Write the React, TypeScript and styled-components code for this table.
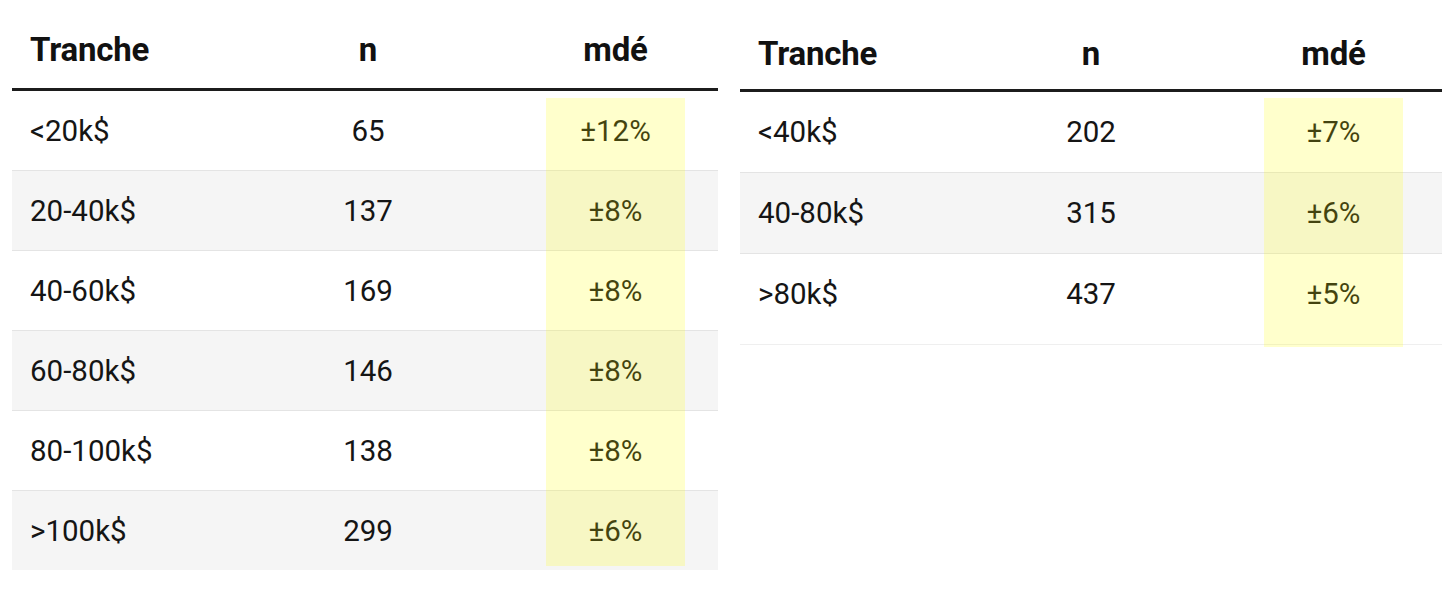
import React from "react";
import styled, { createGlobalStyle } from "styled-components";

const Global = createGlobalStyle`
  html, body { margin: 0; padding: 0; background: #ffffff; }
  body { font-family: Roboto, "Liberation Sans", Arial, sans-serif; color: #151515; }
`;

const Page = styled.div`
  display: flex;
  align-items: flex-start;
  gap: 22px;
  padding-left: 12px;
  width: 1456px;
  height: 591px;
  box-sizing: border-box;
`;

const Table = styled.div<{ $width: number }>`
  position: relative;
  width: ${(p) => p.$width}px;
  display: flex;
  flex-direction: column;
`;

const HeaderRow = styled.div<{ $cols: string; $padTop: number; $height: number }>`
  display: grid;
  grid-template-columns: ${(p) => p.$cols};
  align-items: center;
  box-sizing: border-box;
  height: ${(p) => p.$height}px;
  padding-top: ${(p) => p.$padTop}px;
  border-bottom: 3px solid #1c1c1c;
`;

const HeadCell = styled.div<{ $align: "left" | "center" }>`
  font-size: 33px;
  font-weight: 700;
  letter-spacing: -0.2px;
  color: #111;
  text-align: ${(p) => p.$align};
  padding-left: ${(p) => (p.$align === "left" ? "18px" : "0")};
`;

const Body = styled.div<{ $padBottom: number }>`
  display: flex;
  flex-direction: column;
  padding-bottom: ${(p) => p.$padBottom}px;
  border-bottom: ${(p) => (p.$padBottom > 0 ? "1px solid #efefef" : "none")};
`;

const Row = styled.div<{ $cols: string; $shaded: boolean; $last: boolean; $h: number }>`
  display: grid;
  grid-template-columns: ${(p) => p.$cols};
  align-items: center;
  height: ${(p) => p.$h}px;
  background: ${(p) => (p.$shaded ? "#f5f5f5" : "#ffffff")};
  border-bottom: ${(p) => (p.$last ? "none" : "1px solid #e4e4e4")};
`;

const Cell = styled.div<{ $align: "left" | "center" }>`
  font-size: 29.5px;
  font-weight: 400;
  color: #151515;
  text-align: ${(p) => p.$align};
  padding-left: ${(p) => (p.$align === "left" ? "18px" : "0")};
`;

const Highlight = styled.div<{ $left: number; $top: number; $height: number }>`
  position: absolute;
  left: ${(p) => p.$left}px;
  top: ${(p) => p.$top}px;
  width: 139px;
  height: ${(p) => p.$height}px;
  background: rgba(255, 255, 0, 0.2);
  pointer-events: none;
`;

type RowData = [string, string, string];

const leftRows: RowData[] = [
  ["<20k$", "65", "±12%"],
  ["20-40k$", "137", "±8%"],
  ["40-60k$", "169", "±8%"],
  ["60-80k$", "146", "±8%"],
  ["80-100k$", "138", "±8%"],
  [">100k$", "299", "±6%"],
];

const rightRows: RowData[] = [
  ["<40k$", "202", "±7%"],
  ["40-80k$", "315", "±6%"],
  [">80k$", "437", "±5%"],
];

interface DataTableProps {
  width: number;
  cols: string;
  rows: RowData[];
  headPad: number;
  headHeight: number;
  rowHeight: number;
  bodyPad: number;
  hlLeft: number;
  hlTop: number;
  hlHeight: number;
}

function DataTable(p: DataTableProps) {
  return (
    <Table $width={p.width}>
      <HeaderRow $cols={p.cols} $padTop={p.headPad} $height={p.headHeight}>
        <HeadCell $align="left">Tranche</HeadCell>
        <HeadCell $align="center">n</HeadCell>
        <HeadCell $align="center">mdé</HeadCell>
        <div />
      </HeaderRow>
      <Body $padBottom={p.bodyPad}>
        {p.rows.map((r, i) => (
          <Row
            key={r[0]}
            $cols={p.cols}
            $h={p.rowHeight}
            $shaded={i % 2 === 1}
            $last={i === p.rows.length - 1}
          >
            <Cell $align="left">{r[0]}</Cell>
            <Cell $align="center">{r[1]}</Cell>
            <Cell $align="center">{r[2]}</Cell>
            <div />
          </Row>
        ))}
      </Body>
      <Highlight $left={p.hlLeft} $top={p.hlTop} $height={p.hlHeight} />
    </Table>
  );
}

export default function App() {
  return (
    <>
      <Global />
      <Page>
        <DataTable
          width={706}
          cols="178px 356px 139px 1fr"
          rows={leftRows}
          headPad={11}
          headHeight={91}
          rowHeight={79}
          bodyPad={0}
          hlLeft={534}
          hlTop={98}
          hlHeight={468}
        />
        <DataTable
          width={702}
          cols="178px 346px 139px 1fr"
          rows={rightRows}
          headPad={17}
          headHeight={92}
          rowHeight={80}
          bodyPad={10}
          hlLeft={524}
          hlTop={98}
          hlHeight={249}
        />
      </Page>
    </>
  );
}
